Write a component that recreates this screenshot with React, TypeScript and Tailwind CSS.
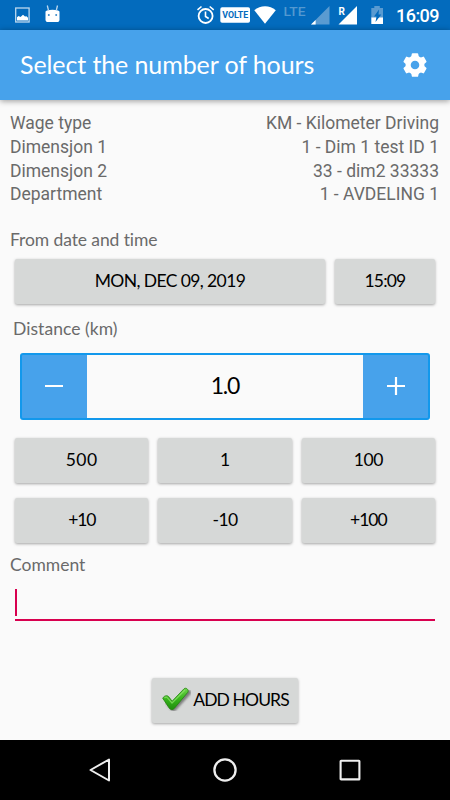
import React, { useState } from 'react';

const details = [
  { label: 'Wage type', value: 'KM - Kilometer Driving' },
  { label: 'Dimensjon 1', value: '1 - Dim 1 test ID 1' },
  { label: 'Dimensjon 2', value: '33 - dim2 33333' },
  { label: 'Department', value: '1 - AVDELING 1' },
];

const presets = [
  { label: '500', spacing: 'tracking-[0.5px]' },
  { label: '1', spacing: 'tracking-normal' },
  { label: '100', spacing: 'tracking-[-0.5px]' },
  { label: '+10', spacing: 'tracking-[-1.2px]' },
  { label: '-10', spacing: 'tracking-[-0.6px]' },
  { label: '+100', spacing: 'tracking-[-1px]' },
];

const buttonClass =
  'flex items-center justify-center rounded-[2px] bg-[#d6d8d7] text-black shadow-[0_1px_3px_rgba(0,0,0,0.35)]';

function StatusBar() {
  return (
    <div className="h-[30px] bg-[#036bbd]">
      <svg width="450" height="30" viewBox="0 0 450 30" className="block">
        {/* Screenshot notification */}
        <rect x="15.7" y="8" width="13.4" height="14" fill="none" stroke="#bcd8ee" strokeWidth="1.3" />
        <path d="M17 20.5V17.2l1.5-1.2 2 1 2.5-2.2 2 1.8 1.5-.4 1.500 1.500v2.800z" fill="#fff" />
        {/* Android head */}
        <path d="M45.500 11.500c1-1 3-1.700 7-1.700s6 .7 7 1.700v8.200c0 1.500-1 2.300-2.500 2.300h-9c-1.500 0-2.500-.8-2.500-2.300z" fill="#fff" />
        <path d="M47.300 5.500l1.200 5M57.500 5.500l-1.200 5" stroke="#bcd8ee" strokeWidth="1.3" />
        <circle cx="48.8" cy="15" r="1" fill="#3888c8" />
        <circle cx="56.2" cy="15" r="1" fill="#3888c8" />
        {/* Alarm */}
        <circle cx="205.6" cy="16" r="7" fill="none" stroke="#fff" strokeWidth="1.8" />
        <path d="M205.500 11.500v5l3.200 2M197.500 9.800l4-3.300M213.700 9.800l-4-3.300" fill="none" stroke="#fff" strokeWidth="1.6" />
        {/* VoLTE */}
        <rect x="220.3" y="7.3" width="29.7" height="15.4" rx="1.8" fill="#fff" />
        <text x="222.3" y="18" textLength="26" lengthAdjust="spacingAndGlyphs" fontSize="8.5" fontWeight="700" fill="#036bbd" fontFamily="Roboto, sans-serif">VOLTE</text>
        {/* Wifi */}
        <path d="M254.300 10.300c6-5.300 15.500-5.300 21.500 0L265 23.700z" fill="#fff" />
        {/* Mobile signal */}
        <text x="283.5" y="16" textLength="22" lengthAdjust="spacingAndGlyphs" fontSize="13" fontWeight="500" fill="#5499d0" fontFamily="Roboto, sans-serif">LTE</text>
        <path d="M311 24.500L329.500 6v18.500z" fill="#5a9bd1" />
        <path d="M311 24.500l4.600-4.600v4.600z" fill="#fff" />
        <path d="M338.500 24.500L357 6v18.500z" fill="#fff" />
        <text x="338.5" y="15" fontSize="10" fontWeight="700" fill="#fff" fontFamily="Roboto, sans-serif">R</text>
        {/* Charging battery */}
        <path d="M371.300 8h3V6h5.500v2h3.200v10h-11.700z" fill="#5a9bd1" />
        <path d="M371.300 17.500h11.700V24h-11.700z" fill="#fff" />
        <path d="M379 9.500l-5 7h2.500l-1 5.500 5.800-7.500h-2.800z" fill="#036bbd" />
        <text x="396" y="22" textLength="43.5" fontSize="18" fontWeight="500" fill="#fff" fontFamily="Roboto, sans-serif">16:09</text>
      </svg>
    </div>
  );
}

function GearIcon() {
  return (
    <svg width="26" height="26" viewBox="-13 -13 26 26" fill="none" stroke="#fff">
      <circle r="6.9" strokeWidth="5.2" />
      {[0, 60, 120, 180, 240, 300].map((angle) => (
        <path key={angle} d="M-3 -8L-2.400 -11H2.400L3 -8z" transform={`rotate(${angle})`} fill="#fff" strokeWidth="1.6" strokeLinejoin="round" />
      ))}
    </svg>
  );
}

function CheckMark() {
  return (
    <svg width="32" height="28" viewBox="0 0 32 28" className="shrink-0">
      <defs>
        <linearGradient id="check" x1="0" y1="0" x2="0" y2="1">
          <stop offset="0" stopColor="#6ed34b" />
          <stop offset="0.5" stopColor="#37b51c" />
          <stop offset="1" stopColor="#208d0e" />
        </linearGradient>
        <filter id="blur">
          <feGaussianBlur stdDeviation="1" />
        </filter>
      </defs>
      <path d="M5.500 14l5.500 7L26 4.500" transform="translate(1.500 2)" fill="none" stroke="#555" strokeOpacity="0.7" strokeWidth="5" strokeLinecap="round" strokeLinejoin="round" filter="url(#blur)" />
      <path d="M1.700 12.200c1.500-2.500 4.300-3.400 6-1.500l3.400 4.500L23 2.800c2-1.800 5.300 1 3.800 3.500L13.200 22.500c-1.500 1.500-3.300 1.500-4.700 0z" fill="url(#check)" stroke="#23850f" strokeWidth="0.8" />
      <path d="M3.500 12c1-1.200 2.200-1.300 3-.2l4.500 5.200L24 4" fill="none" stroke="#92e56f" strokeOpacity="0.7" strokeWidth="1.2" />
    </svg>
  );
}

function NavBar() {
  return (
    <div className="flex h-[60px] shrink-0 items-center justify-center gap-[97px] bg-black">
      <svg width="28" height="28" viewBox="0 0 28 28">
        <path d="M23 3.500v21L4.500 14z" fill="none" stroke="#eee" strokeWidth="2" strokeLinejoin="round" />
      </svg>
      <svg width="28" height="28" viewBox="0 0 28 28">
        <circle cx="14" cy="14" r="10.6" fill="none" stroke="#eee" strokeWidth="2.3" />
      </svg>
      <svg width="28" height="28" viewBox="0 0 28 28">
        <rect x="4.6" y="4.8" width="18.8" height="18.6" rx="0.5" fill="none" stroke="#eee" strokeWidth="2.1" />
      </svg>
    </div>
  );
}

function App() {
  const [distance, setDistance] = useState(1);

  const applyPreset = (preset: string) => {
    const amount = Number(preset);
    const relative = preset.startsWith('+') || preset.startsWith('-');
    setDistance(relative ? Math.max(0, distance + amount) : amount);
  };

  return (
    <div className="flex h-[800px] w-[450px] flex-col overflow-hidden bg-[#fafafa] font-[Lato,sans-serif] text-[17.5px]">
      <StatusBar />

      <header className="z-10 flex h-[70px] shrink-0 items-center justify-between bg-[#47a2eb] pl-5 pr-[22px] text-white shadow-[0_1px_6px_rgba(0,0,0,0.4)]">
        <h1 className="whitespace-nowrap text-[25px] tracking-[-0.1px]">Select the number of hours</h1>
        <GearIcon />
      </header>

      <main className="flex flex-1 flex-col">
        <dl className="flex flex-col pl-[10px] pr-[11px] pt-[11px] font-[Roboto,sans-serif] leading-6 text-[#6a6a6a]">
          {details.map((row) => (
            <div key={row.label} className="flex h-[23.8px] justify-between whitespace-nowrap">
              <dt>{row.label}</dt>
              <dd>{row.value}</dd>
            </div>
          ))}
        </dl>

        <p className="mt-[22.3px] pl-[10px] leading-6 tracking-[-0.1px] text-[#6a6a6a]">From date and time</p>
        <div className="mt-[6.5px] flex h-[45px] gap-[10px] pl-[15px] pr-[15px]">
          <button className={`${buttonClass} w-[310px] tracking-[-0.6px]`}>MON, DEC 09, 2019</button>
          <button className={`${buttonClass} w-[100px] tracking-[-0.8px]`}>15:09</button>
        </div>

        <p className="mt-[13.5px] pl-[13px] leading-6 tracking-[0.05px] text-[#6a6a6a]">Distance (km)</p>
        <div className="mx-5 mt-[11.4px] flex h-[67px] overflow-hidden rounded-[3px] border-2 border-[#1298ec] bg-[#47a2eb]">
          <button className="flex w-[65px] items-center justify-center" onClick={() => setDistance(Math.max(0, distance - 1))}>
            <svg width="20" height="20" viewBox="0 0 20 20">
              <path d="M0 10h18" stroke="#fff" strokeWidth="2.2" />
            </svg>
          </button>
          <div className="flex flex-1 items-center justify-center bg-[#fafafa] pb-[2px] text-[23px] tracking-[-1.2px] text-black">
            {distance.toFixed(1)}
          </div>
          <button className="flex w-[65px] items-center justify-center" onClick={() => setDistance(distance + 1)}>
            <svg width="20" height="20" viewBox="0 0 20 20">
              <path d="M1 10h18M10 1v18" stroke="#fff" strokeWidth="2.2" />
            </svg>
          </button>
        </div>

        <div className="mt-[18px] grid grid-cols-3 gap-x-[10px] gap-y-[15px] px-[15px]">
          {presets.map(({ label, spacing }) => (
            <button key={label} className={`${buttonClass} h-[45px] ${spacing}`} onClick={() => applyPreset(label)}>
              {label}
            </button>
          ))}
        </div>

        <label className="mt-[10.5px] pl-[10px] leading-6 text-[#6a6a6a]">Comment</label>
        <div className="mx-[15px] mt-[11.5px] h-[32px] border-b-2 border-[#d8004f]">
          <div className="h-[27px] w-[2px] bg-[#d8004f]" />
        </div>

        <button className={`${buttonClass} mx-auto mt-[57px] h-[45px] w-[146px] whitespace-nowrap tracking-[-0.9px]`}>
          <CheckMark />
          ADD HOURS
        </button>
      </main>

      <NavBar />
    </div>
  );
}

export default App;
